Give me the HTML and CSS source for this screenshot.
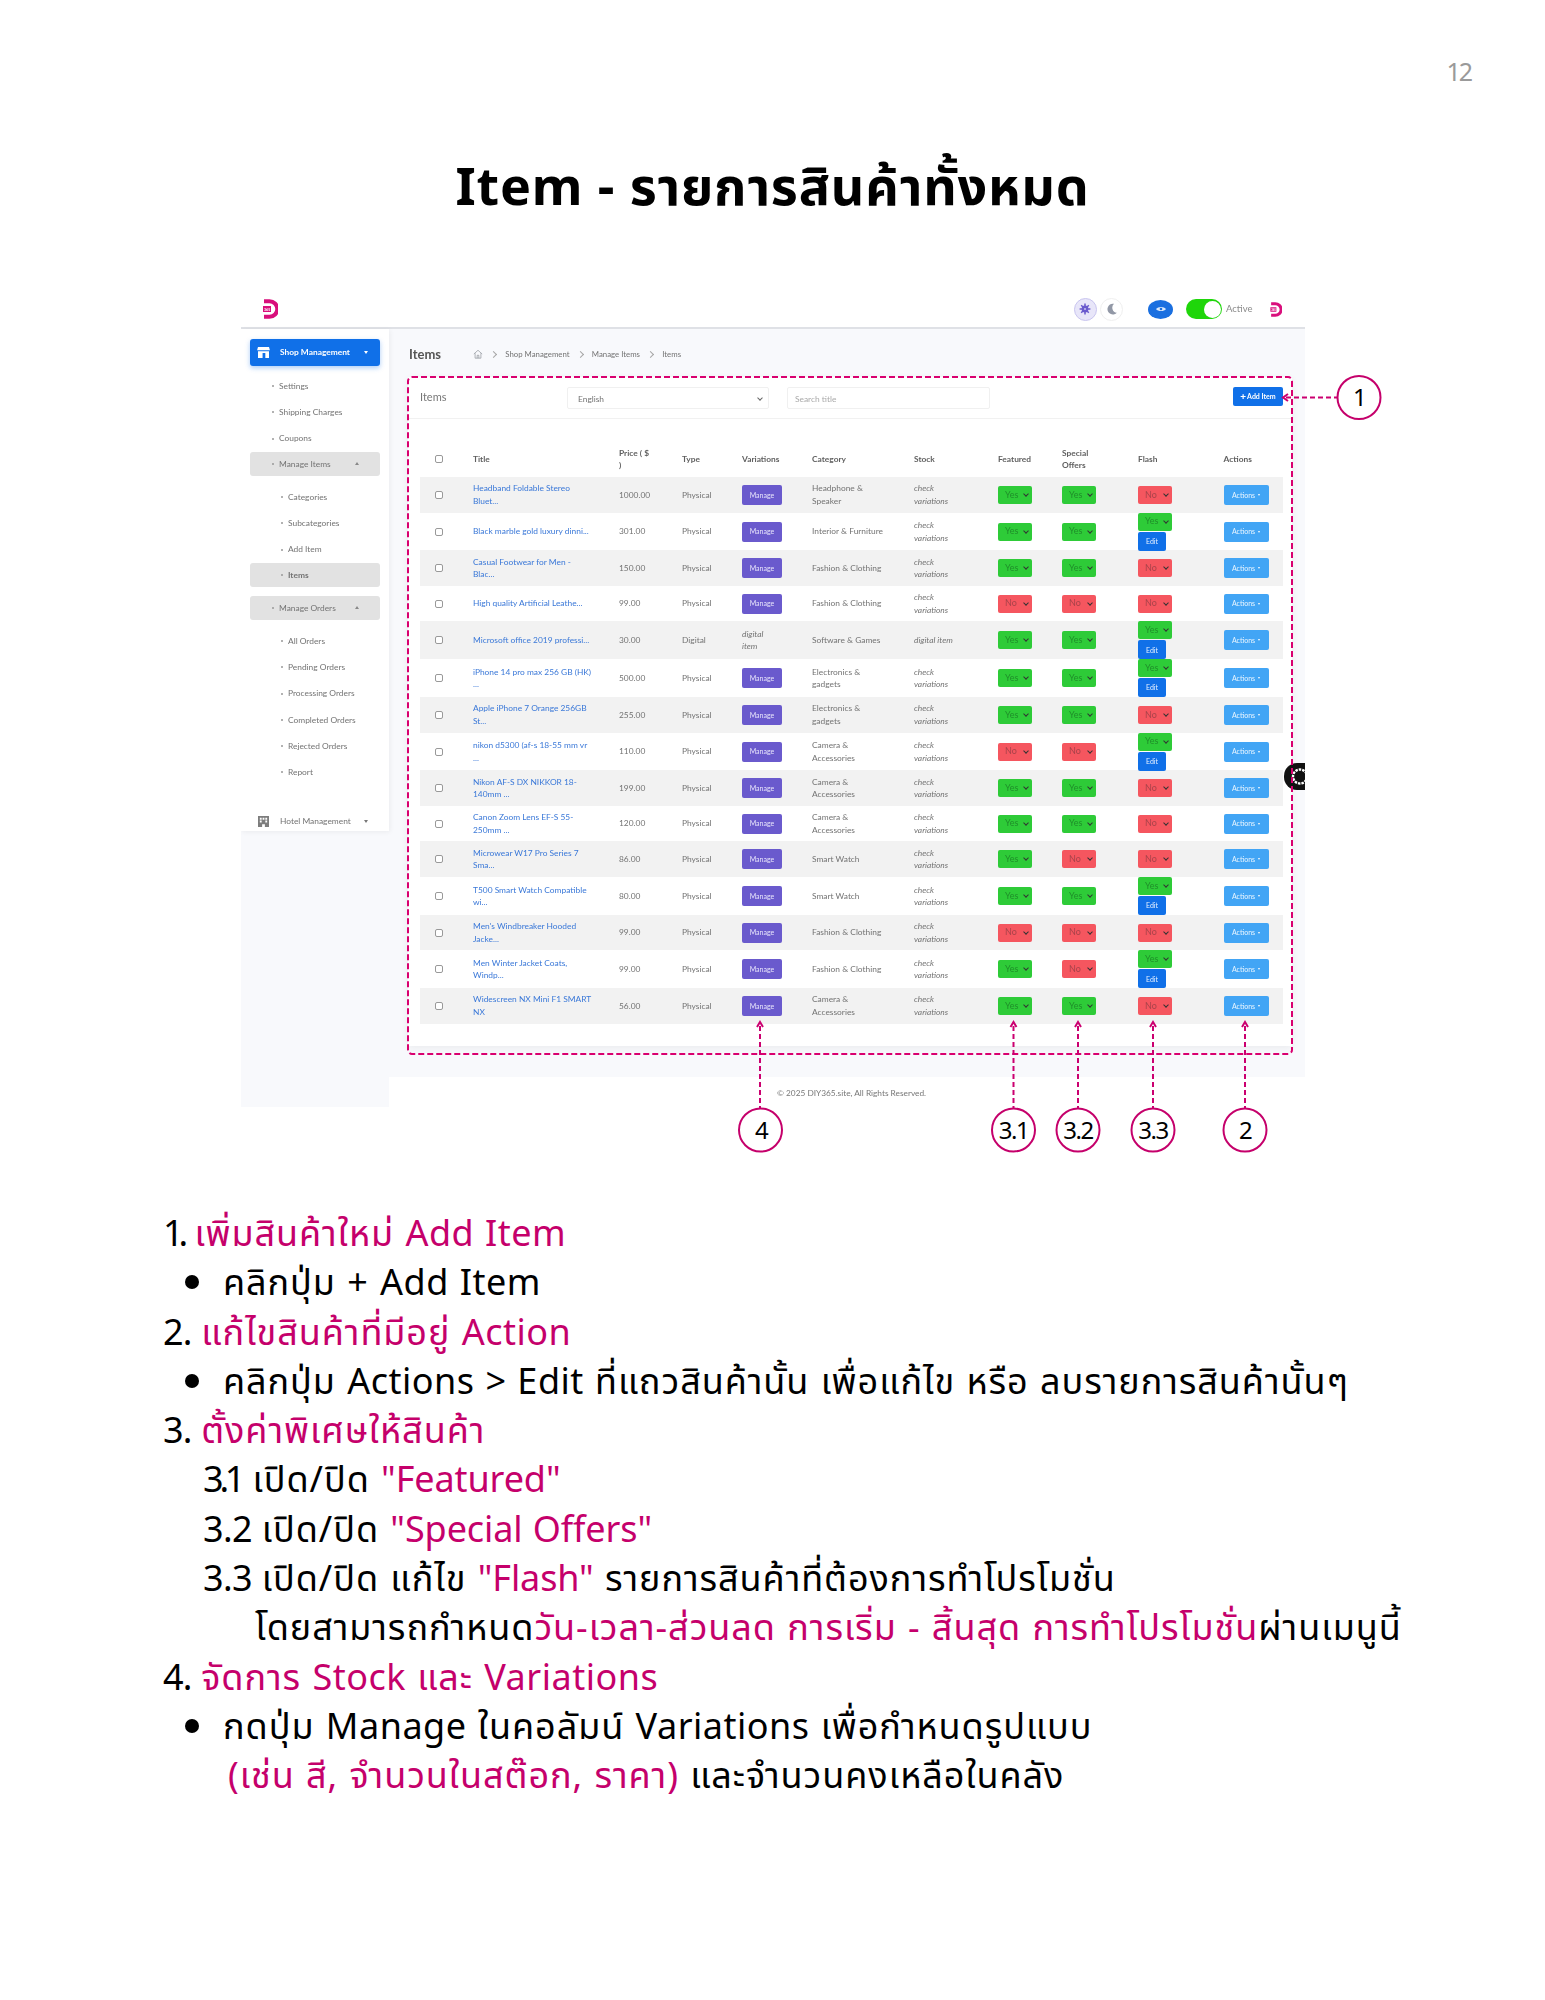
FILE: index.html
```html
<!DOCTYPE html>
<html lang="th">
<head>
<meta charset="utf-8">
<title>Item - รายการสินค้าทั้งหมด</title>
<link rel="stylesheet" href="styles.css">
</head>
<body>
<div class="page">
  <div class="page-num">12</div>
  <h1 class="doc-title">Item - รายการสินค้าทั้งหมด</h1>

  <div class="shot">
    <div class="screen">
      <header class="topbar">
        <svg class="logo" viewBox="0 0 15 20"><path d="M1 2.200H6.500A7.800 7.800 0 0 1 6.500 17.800H1" fill="none" stroke="#d90f7c" stroke-width="4"/><path d="M0 7H8V13H0Z" fill="#d90f7c"/><text class="logo-text" x="1" y="11.500">365</text></svg>
        <div class="top-tools">
          <span class="round sun"><svg viewBox="0 0 12 12"><path d="M6 .6V11.400M.6 6H11.400M2.200 2.200 9.800 9.800M9.800 2.200 2.200 9.800" stroke="#6a5acd" stroke-width="1.500"/><circle cx="6" cy="6" r="3.400" fill="#6a5acd"/><circle cx="6" cy="6" r="1" fill="#c9c5ef"/></svg></span>
          <span class="round moon"><svg viewBox="0 0 12 12"><path d="M8 .8A5.400 5.400 0 1 0 10.800 9.800 5.200 5.200 0 0 1 8 .8Z" fill="#9298a6"/></svg></span>
          <span class="round eye"><svg viewBox="0 0 12 12"><path d="M1 6C3 3.200 9 3.200 11 6 9 8.800 3 8.800 1 6Z" fill="#dbe9fb"/><circle cx="6" cy="6" r="1.300" fill="#1a6fe0"/></svg></span>
          <span class="toggle"><span class="knob"></span></span>
          <span class="active-label">Active</span>
          <svg class="logo logo-small" viewBox="0 0 15 20"><path d="M1 2.200H6.500A7.800 7.800 0 0 1 6.500 17.800H1" fill="none" stroke="#d90f7c" stroke-width="4"/><path d="M0 7H8V13H0Z" fill="#d90f7c"/><text class="logo-text" x="1" y="11.500">365</text></svg>
        </div>
      </header>
      <div class="shot-body">
        <aside class="sidebar">
          <div class="nav-main"><svg class="nav-icon" viewBox="0 0 14 12"><path d="M1 0H13L14 3.500H0ZM1 4.500H13V12H9V6.500H6V12H1Z" fill="#fff"/></svg><span class="nav-main-label">Shop Management</span><i class="caret caret-white"></i></div>
          <div class="nav-subs">
            <div class="nav-link">Settings</div>
            <div class="nav-link">Shipping Charges</div>
            <div class="nav-link">Coupons</div>
          </div>
          <div class="nav-box">Manage Items<i class="caret-up"></i></div>
          <div class="nav-subs">
            <div class="nav-link sub">Categories</div>
            <div class="nav-link sub">Subcategories</div>
            <div class="nav-link sub">Add Item</div>
          </div>
          <div class="nav-box sub strong">Items</div>
          <div class="nav-box gap-top">Manage Orders<i class="caret-up"></i></div>
          <div class="nav-subs">
            <div class="nav-link sub">All Orders</div>
            <div class="nav-link sub">Pending Orders</div>
            <div class="nav-link sub">Processing Orders</div>
            <div class="nav-link sub">Completed Orders</div>
            <div class="nav-link sub">Rejected Orders</div>
            <div class="nav-link sub">Report</div>
          </div>
          <div class="nav-hotel"><svg class="nav-icon" viewBox="0 0 12 12"><path d="M0 0H12V12H7.500V9H4.500V12H0ZM2 2V4H4V2ZM5 2V4H7V2ZM8 2V4H10V2ZM2 5V7H4V5ZM8 5V7H10V5Z" fill="#7d7d7d" fill-rule="evenodd"/></svg><span class="nav-hotel-label">Hotel Management</span><i class="caret caret-gray"></i></div>
        </aside>
        <main class="main">
          <div class="main-inner">
            <div class="crumbs">
              <strong class="crumb-title">Items</strong>
              <svg class="home" viewBox="0 0 12 12"><path d="M1 6 6 1.500 11 6M2.500 5V11H9.500V5M5 11V7.500H7V11" fill="none" stroke="#8b8f96" stroke-width=".8"/></svg>
              <i class="chev"></i><span class="crumb">Shop Management</span>
              <i class="chev"></i><span class="crumb">Manage Items</span>
              <i class="chev"></i><span class="crumb">Items</span>
            </div>
            <section class="card">
              <div class="card-head">
                <div class="card-title">Items</div>
                <div class="field lang"><span>English</span><i class="mini-caret"></i></div>
                <div class="field search">Search title</div>
                <div class="add-btn"><b>+</b>Add Item</div>
              </div>
              <div class="table">
                <div class="row head"><span><i class="check"></i></span><span>Title</span><span>Price ( $<br>)</span><span>Type</span><span>Variations</span><span>Category</span><span>Stock</span><span>Featured</span><span>Special<br>Offers</span><span>Flash</span><span>Actions</span></div>

                <div class="row odd"><span><i class="check"></i></span><a>Headband Foldable Stereo<br>Bluet...</a><span>1000.00</span><span>Physical</span><span><b class="manage">Manage</b></span><span>Headphone &amp;<br>Speaker</span><em>check<br>variations</em><span><b class="pick yes">Yes</b></span><span><b class="pick yes">Yes</b></span><span><b class="pick no">No</b></span><span><b class="actions">Actions</b></span></div>

                <div class="row tall"><span><i class="check"></i></span><a>Black marble gold luxury dinni...</a><span>301.00</span><span>Physical</span><span><b class="manage">Manage</b></span><span>Interior &amp; Furniture</span><em>check<br>variations</em><span><b class="pick yes">Yes</b></span><span><b class="pick yes">Yes</b></span><span class="stack"><b class="pick yes">Yes</b><b class="edit">Edit</b></span><span><b class="actions">Actions</b></span></div>

                <div class="row odd"><span><i class="check"></i></span><a>Casual Footwear for Men -<br>Blac...</a><span>150.00</span><span>Physical</span><span><b class="manage">Manage</b></span><span>Fashion &amp; Clothing</span><em>check<br>variations</em><span><b class="pick yes">Yes</b></span><span><b class="pick yes">Yes</b></span><span><b class="pick no">No</b></span><span><b class="actions">Actions</b></span></div>

                <div class="row"><span><i class="check"></i></span><a>High quality Artificial Leathe...</a><span>99.00</span><span>Physical</span><span><b class="manage">Manage</b></span><span>Fashion &amp; Clothing</span><em>check<br>variations</em><span><b class="pick no">No</b></span><span><b class="pick no">No</b></span><span><b class="pick no">No</b></span><span><b class="actions">Actions</b></span></div>

                <div class="row odd tall"><span><i class="check"></i></span><a>Microsoft office 2019 professi...</a><span>30.00</span><span>Digital</span><em>digital<br>item</em><span>Software &amp; Games</span><em>digital item</em><span><b class="pick yes">Yes</b></span><span><b class="pick yes">Yes</b></span><span class="stack"><b class="pick yes">Yes</b><b class="edit">Edit</b></span><span><b class="actions">Actions</b></span></div>

                <div class="row tall"><span><i class="check"></i></span><a>iPhone 14 pro max 256 GB (HK)<br>...</a><span>500.00</span><span>Physical</span><span><b class="manage">Manage</b></span><span>Electronics &amp;<br>gadgets</span><em>check<br>variations</em><span><b class="pick yes">Yes</b></span><span><b class="pick yes">Yes</b></span><span class="stack"><b class="pick yes">Yes</b><b class="edit">Edit</b></span><span><b class="actions">Actions</b></span></div>

                <div class="row odd"><span><i class="check"></i></span><a>Apple iPhone 7 Orange 256GB<br>St...</a><span>255.00</span><span>Physical</span><span><b class="manage">Manage</b></span><span>Electronics &amp;<br>gadgets</span><em>check<br>variations</em><span><b class="pick yes">Yes</b></span><span><b class="pick yes">Yes</b></span><span><b class="pick no">No</b></span><span><b class="actions">Actions</b></span></div>

                <div class="row tall"><span><i class="check"></i></span><a>nikon d5300 (af-s 18-55 mm vr<br>...</a><span>110.00</span><span>Physical</span><span><b class="manage">Manage</b></span><span>Camera &amp;<br>Accessories</span><em>check<br>variations</em><span><b class="pick no">No</b></span><span><b class="pick no">No</b></span><span class="stack"><b class="pick yes">Yes</b><b class="edit">Edit</b></span><span><b class="actions">Actions</b></span></div>

                <div class="row odd"><span><i class="check"></i></span><a>Nikon AF-S DX NIKKOR 18-<br>140mm ...</a><span>199.00</span><span>Physical</span><span><b class="manage">Manage</b></span><span>Camera &amp;<br>Accessories</span><em>check<br>variations</em><span><b class="pick yes">Yes</b></span><span><b class="pick yes">Yes</b></span><span><b class="pick no">No</b></span><span><b class="actions">Actions</b></span></div>

                <div class="row"><span><i class="check"></i></span><a>Canon Zoom Lens EF-S 55-<br>250mm ...</a><span>120.00</span><span>Physical</span><span><b class="manage">Manage</b></span><span>Camera &amp;<br>Accessories</span><em>check<br>variations</em><span><b class="pick yes">Yes</b></span><span><b class="pick yes">Yes</b></span><span><b class="pick no">No</b></span><span><b class="actions">Actions</b></span></div>

                <div class="row odd"><span><i class="check"></i></span><a>Microwear W17 Pro Series 7<br>Sma...</a><span>86.00</span><span>Physical</span><span><b class="manage">Manage</b></span><span>Smart Watch</span><em>check<br>variations</em><span><b class="pick yes">Yes</b></span><span><b class="pick no">No</b></span><span><b class="pick no">No</b></span><span><b class="actions">Actions</b></span></div>

                <div class="row tall"><span><i class="check"></i></span><a>T500 Smart Watch Compatible<br>wi...</a><span>80.00</span><span>Physical</span><span><b class="manage">Manage</b></span><span>Smart Watch</span><em>check<br>variations</em><span><b class="pick yes">Yes</b></span><span><b class="pick yes">Yes</b></span><span class="stack"><b class="pick yes">Yes</b><b class="edit">Edit</b></span><span><b class="actions">Actions</b></span></div>

                <div class="row odd"><span><i class="check"></i></span><a>Men's Windbreaker Hooded<br>Jacke...</a><span>99.00</span><span>Physical</span><span><b class="manage">Manage</b></span><span>Fashion &amp; Clothing</span><em>check<br>variations</em><span><b class="pick no">No</b></span><span><b class="pick no">No</b></span><span><b class="pick no">No</b></span><span><b class="actions">Actions</b></span></div>

                <div class="row tall"><span><i class="check"></i></span><a>Men Winter Jacket Coats,<br>Windp...</a><span>99.00</span><span>Physical</span><span><b class="manage">Manage</b></span><span>Fashion &amp; Clothing</span><em>check<br>variations</em><span><b class="pick yes">Yes</b></span><span><b class="pick no">No</b></span><span class="stack"><b class="pick yes">Yes</b><b class="edit">Edit</b></span><span><b class="actions">Actions</b></span></div>

                <div class="row odd"><span><i class="check"></i></span><a>Widescreen NX Mini F1 SMART<br>NX</a><span>56.00</span><span>Physical</span><span><b class="manage">Manage</b></span><span>Camera &amp;<br>Accessories</span><em>check<br>variations</em><span><b class="pick yes">Yes</b></span><span><b class="pick yes">Yes</b></span><span><b class="pick no">No</b></span><span><b class="actions">Actions</b></span></div>
              </div>
            </section>
          </div>
          <footer class="foot">© 2025 DIY365.site, All Rights Reserved.</footer>
        </main>
        <div class="gear"><svg viewBox="0 0 21 21"><circle cx="16" cy="10.500" r="7" fill="none" stroke="#fff" stroke-width="2.400" stroke-dasharray="2.500 1"/><circle cx="16" cy="10.500" r="3.600" fill="#111"/></svg></div>
      </div>
    </div>

    <svg class="notes" viewBox="241 295 1064 812">
      <rect class="frame" x="408" y="377" width="884" height="677" rx="4"/>
      <path class="lead" d="M1286 397.500H1338"/>
      <path class="head-mark" d="M1288 394 1283 397.500 1288 401"/>
      <path class="lead" d="M760 1026V1109M1013.500 1026V1109M1078 1026V1109M1153 1026V1109M1245 1026V1109"/>
      <path class="head-mark" d="M757 1027 760 1022 763 1027M1010.500 1027 1013.500 1022 1016.500 1027M1075 1027 1078 1022 1081 1027M1150 1027 1153 1022 1156 1027M1242 1027 1245 1022 1248 1027"/>
      <circle class="ring" cx="1359" cy="397.500" r="21.500"/>
      <circle class="ring" cx="760.500" cy="1130" r="21.500"/>
      <circle class="ring" cx="1013.500" cy="1130" r="21.500"/>
      <circle class="ring" cx="1078" cy="1130" r="21.500"/>
      <circle class="ring" cx="1153" cy="1130" r="21.500"/>
      <circle class="ring" cx="1245" cy="1130" r="21.500"/>
      <text class="ring-label" x="1359" y="406">1</text>
      <text class="ring-label" x="761" y="1139">4</text>
      <text class="ring-label" x="1013.500" y="1139">3.1</text>
      <text class="ring-label" x="1078" y="1139">3.2</text>
      <text class="ring-label" x="1153" y="1139">3.3</text>
      <text class="ring-label" x="1245" y="1139">2</text>
    </svg>
  </div>

  <div class="guide">
    <div class="line"><span class="one">1.</span> <span class="pink">เพิ่มสินค้าใหม่ <span class="lat">Add Item</span></span></div>
    <div class="line bullet"><i class="dot"></i><span>คลิกปุ่ม + <span class="lat">Add Item</span></span></div>
    <div class="line"><span class="num">2. </span><span class="pink">แก้ไขสินค้าที่มีอยู่ <span class="lat">Action</span></span></div>
    <div class="line bullet"><i class="dot"></i><span>คลิกปุ่ม <span class="lat">Actions &gt; Edit</span> ที่แถวสินค้านั้น เพื่อแก้ไข หรือ ลบรายการสินค้านั้นๆ</span></div>
    <div class="line"><span class="num">3. </span><span class="pink">ตั้งค่าพิเศษให้สินค้า</span></div>
    <div class="line step"><span class="one-step">3.1</span> เปิด/ปิด <span class="pink quote">"Featured"</span></div>
    <div class="line step"><span class="step-num">3.2 </span>เปิด/ปิด <span class="pink quote">"Special Offers"</span></div>
    <div class="line step"><span class="step-num">3.3 </span>เปิด/ปิด แก้ไข <span class="pink quote">"Flash"</span> รายการสินค้าที่ต้องการทำโปรโมชั่น</div>
    <div class="line deep">โดยสามารถกำหนด<span class="pink">วัน-เวลา-ส่วนลด การเริ่ม - สิ้นสุด การทำโปรโมชั่น</span>ผ่านเมนูนี้</div>
    <div class="line"><span class="num">4. </span><span class="pink">จัดการ <span class="lat">Stock</span> และ <span class="lat">Variations</span></span></div>
    <div class="line bullet"><i class="dot"></i><span>กดปุ่ม <span class="lat">Manage</span> ในคอลัมน์ <span class="lat">Variations</span> เพื่อกำหนดรูปแบบ</span></div>
    <div class="line more"><span class="pink">(เช่น สี, จำนวนในสต๊อก, ราคา)</span> และจำนวนคงเหลือในคลัง</div>
  </div>
</div>
</body>
</html>
```
FILE: styles.css
```css
* { box-sizing: border-box; }
html, body { margin: 0; background: #fff; }
body { font-family: "Noto Sans", "Noto Sans Thai", "Open Sans", sans-serif; color: #000; }
.page { width: 1545px; height: 2000px; overflow: hidden; padding-top: 54px; }

.page-num { height: 34px; padding-right: 74px; text-align: right; font-size: 25px; line-height: 34px; letter-spacing: -2px; color: #9a9a9a; }
.doc-title { margin: 67px 0 0; height: 60px; text-align: center; font-size: 52px; line-height: 60px; font-weight: 700; letter-spacing: .85px; }

.shot { position: relative; margin: 80px 0 0 241px; width: 1064px; height: 812px; }
.screen { width: 1064px; height: 812px; overflow: hidden; filter: blur(.45px); font-family: Lato, "Liberation Sans", sans-serif; font-size: 8.4px; line-height: 12.5px; color: #737373; }

.topbar { height: 34px; display: flex; align-items: center; padding: 0 23px 4px 22px; border-bottom: 2px solid #dfe1e6; background: #fff; }
.logo { width: 15px; height: 20px; }
.logo-text { font-family: Lato, sans-serif; font-size: 3.600px; font-weight: 700; fill: #fff; }
.logo-small { width: 12px; height: 15px; margin-left: 20px; }
.top-tools { margin-left: auto; display: flex; align-items: center; }
.round { width: 23px; height: 23px; border-radius: 50%; display: flex; align-items: center; justify-content: center; }
.round svg { width: 12px; height: 12px; }
.sun { background: #e8e6f9; border: 1px solid #c9c5ef; }
.moon { margin-left: 3.500px; background: #fff; border: 1px solid #efefef; }
.eye { margin-left: 25px; width: 25px; height: 19px; background: #1a6fe0; }
.toggle { margin-left: 13px; width: 36px; height: 20px; border-radius: 10px; background: #1fd60a; display: flex; justify-content: flex-end; padding: 1.500px; }
.knob { width: 17px; height: 17px; border-radius: 50%; background: #fff; }
.active-label { margin-left: 4px; width: 24px; font-size: 9.500px; color: #8b8b8b; }

.shot-body { position: relative; display: flex; height: 778px; background: #f8f9fc; }
.sidebar { width: 148px; height: 502px; flex: none; padding: 10px 9px 0; background: #fff; box-shadow: 1px 1px 5px rgba(0,0,0,.06); }
.nav-main { height: 27px; display: flex; align-items: center; padding-left: 7px; border-radius: 3px; background: #1070e8; color: #fff; font-weight: 700; box-shadow: 0 2px 5px rgba(16,112,232,.35); }
.nav-icon { width: 13px; height: 11px; flex: none; }
.nav-main-label { margin-left: 10px; }
.caret { display: block; margin-left: auto; margin-right: 12px; width: 0; height: 0; border: 2.500px solid transparent; border-top: 3px solid #fff; border-bottom: 0; }
.caret-gray { border-top-color: #777; }
.caret-up { display: block; position: absolute; right: 21px; top: 10px; width: 0; height: 0; border: 2.500px solid transparent; border-bottom: 3px solid #888; border-top: 0; }
.nav-link { height: 26.300px; display: flex; align-items: center; padding-left: 29px; position: relative; }
.nav-subs { padding-top: 7px; }
.nav-box + .nav-subs { padding-top: 8px; }
.nav-link::before, .nav-box::before { content: ""; position: absolute; left: 22px; width: 2px; height: 2px; border-radius: 50%; background: #999; }
.nav-link.sub { padding-left: 38px; }
.nav-link.sub::before { left: 31px; }
.nav-box { position: relative; height: 24px; display: flex; align-items: center; padding-left: 29px; border-radius: 3px; background: #e2e2e2; }
.nav-box::before { top: 11px; }
.nav-box.sub { padding-left: 38px; }
.nav-box.sub::before { left: 31px; }
.strong { font-weight: 700; }
.gap-top { margin-top: 9px; }
.nav-hotel { margin-top: 27px; height: 18px; display: flex; align-items: center; padding-left: 7px; }
.nav-hotel-label { margin-left: 10px; }

.main { flex: 1; display: flex; flex-direction: column; }
.main-inner { height: 748px; padding: 0 13px 0 19px; }
.crumbs { height: 48px; display: flex; align-items: center; padding: 2px 0 0 1px; }
.crumb-title { width: 64px; font-size: 13px; color: #555; font-weight: 700; }
.home { width: 10px; height: 10px; }
.chev { width: 5px; height: 5px; margin: 0 9px 0 8.300px; border-top: 1px solid #a5a5a5; border-right: 1px solid #a5a5a5; transform: rotate(45deg); }
.crumb { font-size: 7.800px; }

.card { height: 669px; background: #fff; box-shadow: 0 2px 8px rgba(0,0,0,.06); }
.card-head { height: 42px; display: flex; align-items: flex-start; padding: 10px 9px 0 12px; border-bottom: 1px solid #f1f1f1; }
.card-title { width: 147px; font-size: 11px; line-height: 20px; color: #777; }
.field { height: 22px; display: flex; align-items: center; padding: 2px 0 0 10px; border: 1px solid #f0f0f0; border-radius: 2px; }
.lang { width: 202px; justify-content: space-between; padding-right: 6px; }
.search { width: 203px; margin-left: 18px; padding-left: 7px; color: #aaa; }
.mini-caret { width: 4px; height: 4px; margin-top: -3px; border-bottom: 1px solid #666; border-right: 1px solid #666; transform: rotate(45deg); }
.add-btn { margin-left: auto; width: 50px; height: 19px; display: flex; align-items: center; justify-content: center; border-radius: 2px; background: #1070e8; color: #fff; font-size: 7px; font-weight: 700; }
.add-btn b { font-size: 10px; margin-right: 1px; }

.table { padding: 0 9px 0 12px; }
.row { display: grid; grid-template-columns: 53px 146px 63px 60px 70px 102px 84px 64px 76px 85.500px 59.500px; align-items: center; height: 35.550px; }
.row.tall { height: 37.800px; }
.row.odd { background: #f2f2f2; }
.row.head { height: 36px; margin-top: 22px; font-weight: 700; color: #5f5f5f; }
.row > a { color: #3a78d8; }
.row > em { color: #737373; }
.row > span:first-child { padding-left: 15px; display: flex; }
.check { display: block; width: 8px; height: 8px; border: 1px solid #999; border-radius: 2px; background: #fff; }
.stack { display: flex; flex-direction: column; align-items: flex-start; gap: 1px; }

.pick { display: flex; align-items: center; width: 34px; height: 18px; padding-left: 7px; border-radius: 2px; font-size: 9px; font-weight: 400; position: relative; color: #1f8f2a; }
.pick::after { content: ""; position: absolute; right: 4px; top: 6px; width: 3px; height: 3px; border-right: 1px solid #333; border-bottom: 1px solid #333; transform: rotate(45deg); }
.yes { background: #2ecb38; }
.no { background: #f5565f; color: #a8434a; }
.manage { display: flex; align-items: center; justify-content: center; width: 40px; height: 20px; border-radius: 2px; background: #6a5acd; color: #e8e5fb; font-size: 7px; font-weight: 400; }
.edit { display: flex; align-items: center; justify-content: center; width: 28px; height: 19px; border-radius: 2px; background: #1070e8; color: #e4f0ff; font-size: 7px; font-weight: 400; }
.actions { display: flex; align-items: center; justify-content: center; width: 45px; height: 20px; border-radius: 2px; background: #42a5f5; color: #eaf6ff; font-size: 7px; font-weight: 400; }
.actions::after { content: ""; margin-left: 3px; border: 1.500px solid transparent; border-top: 2px solid #fff; border-bottom: 0; }

.foot { height: 30px; display: flex; align-items: center; padding: 2px 0 0 388px; background: #fff; color: #777; font-size: 8.300px; }

.gear { position: absolute; right: 0; top: 434px; width: 21px; height: 27px; border-radius: 13px 0 0 13px; background: #111; display: flex; align-items: center; overflow: hidden; }
.gear svg { width: 21px; height: 21px; flex: none; }

.notes { position: absolute; left: 0; top: 0; width: 1064px; height: 812px; overflow: visible; }
.frame { fill: none; stroke: #d9006f; stroke-width: 2; stroke-dasharray: 6 3; }
.lead { fill: none; stroke: #cb0070; stroke-width: 2; stroke-dasharray: 5 3; }
.head-mark { fill: none; stroke: #cb0070; stroke-width: 2; }
.ring { fill: #fff; stroke: #c5006b; stroke-width: 2; }
.ring-label { font-family: "Noto Sans", sans-serif; font-size: 24px; text-anchor: middle; fill: #000; letter-spacing: -1.500px; }

.guide { margin: 101px 0 0 163px; font-size: 36px; letter-spacing: .95px; word-spacing: 1px; }
.line { height: 49.300px; line-height: 49.300px; white-space: nowrap; }
.pink { color: #c5006b; }
.lat { letter-spacing: .5px; }
.quote { letter-spacing: -.1px; }
.num { letter-spacing: -.8px; }
.one { letter-spacing: -5px; }
.one-step { letter-spacing: -4.200px; }
.step-num { letter-spacing: -.6px; }
.bullet { display: flex; align-items: center; padding-left: 22px; }
.dot { width: 14px; height: 14px; border-radius: 50%; background: #000; margin-right: 24px; flex: none; }
.step { padding-left: 40px; }
.deep { padding-left: 92px; }
.more { padding-left: 65px; }
```
